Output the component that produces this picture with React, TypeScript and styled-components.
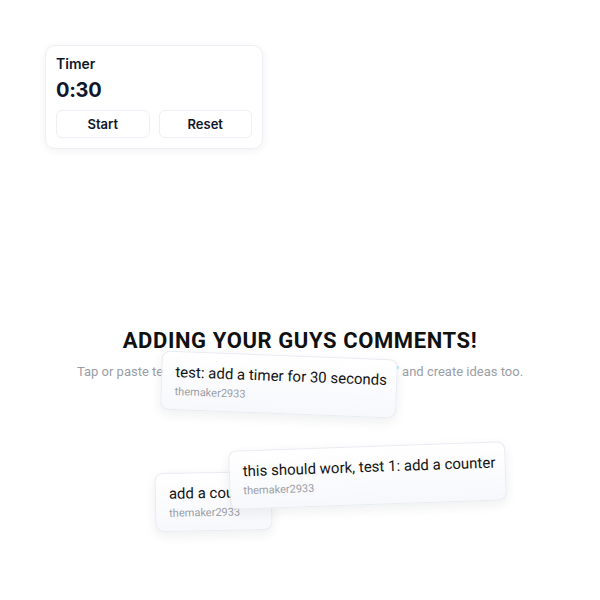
import React from "react";
import styled, { createGlobalStyle } from "styled-components";

const Global = createGlobalStyle`
  html, body { margin: 0; padding: 0; background: #ffffff; }
  body { font-family: Roboto, "Liberation Sans", sans-serif; }
`;

const Page = styled.div`
  position: relative;
  width: 600px;
  height: 600px;
  box-sizing: border-box;
  padding: 45px 0 0;
  display: flex;
  flex-direction: column;
  overflow: hidden;
  background: #ffffff;
`;

const TimerCard = styled.div`
  align-self: flex-start;
  margin-left: 45px;
  width: 218px;
  box-sizing: border-box;
  padding: 9px 10px 10px;
  background: #ffffff;
  border: 1px solid #eceff3;
  border-radius: 10px;
  box-shadow: 0 2px 8px rgba(15, 23, 42, 0.06);
  font-family: Inter, "Liberation Sans", sans-serif;
  color: #0f172a;
`;

const TimerTitle = styled.div`
  font-size: 14px;
  font-weight: 600;
  line-height: 18px;
`;

const TimerValue = styled.div`
  margin-top: 4px;
  font-size: 20px;
  font-weight: 700;
  letter-spacing: -0.3px;
  line-height: 26px;
`;

const ButtonRow = styled.div`
  display: grid;
  grid-template-columns: 1fr 1fr;
  gap: 9px;
  margin-top: 7px;
`;

const Button = styled.button`
  height: 28px;
  background: #ffffff;
  border: 1px solid #eceff3;
  border-radius: 6px;
  font-family: Inter, "Liberation Sans", sans-serif;
  font-size: 13px;
  font-weight: 600;
  color: #0f172a;
  cursor: pointer;
`;

const Intro = styled.div`
  margin-top: 178px;
  text-align: center;
`;

const Headline = styled.h1`
  margin: 0;
  font-size: 22px;
  font-weight: 700;
  letter-spacing: 0.6px;
  line-height: 28px;
  color: #111111;
`;

const Subtitle = styled.p`
  margin: 9px 0 0;
  font-size: 13px;
  line-height: 16px;
  color: #9a9ea6;
`;

// comment notes float freely on the canvas
const Note = styled.div<{ $x: number; $y: number; $w: number; $r: number }>`
  position: absolute;
  left: ${(p) => p.$x}px;
  top: ${(p) => p.$y}px;
  width: ${(p) => p.$w}px;
  box-sizing: border-box;
  padding: 10px 13px 10px;
  background: linear-gradient(180deg, #ffffff 0%, #f7f8fc 100%);
  border: 1px solid #e8ebf1;
  border-radius: 8px;
  box-shadow: 0 4px 12px rgba(15, 23, 42, 0.07);
  transform: rotate(${(p) => p.$r}deg);
  white-space: nowrap;
  overflow: hidden;
`;

const NoteText = styled.div`
  font-size: 15px;
  line-height: 20px;
  color: #141414;
`;

const NoteUser = styled.div`
  margin-top: 3px;
  font-size: 11px;
  line-height: 14px;
  color: #9a9ea6;
`;

const notes = [
  { x: 155, y: 472, w: 117, r: -1, text: "add a counter" },
  { x: 161, y: 355, w: 236, r: 2.2, text: "test: add a timer for 30 seconds" },
  { x: 229, y: 446, w: 277, r: -2, text: "this should work, test 1: add a counter" },
];

export default function App() {
  return (
    <Page>
      <Global />
      <TimerCard>
        <TimerTitle>Timer</TimerTitle>
        <TimerValue>0:30</TimerValue>
        <ButtonRow>
          <Button>Start</Button>
          <Button>Reset</Button>
        </ButtonRow>
      </TimerCard>
      <Intro>
        <Headline>ADDING YOUR GUYS COMMENTS!</Headline>
        <Subtitle>Tap or paste text to leave a comment, or try typing "test" and create ideas too.</Subtitle>
      </Intro>
      {notes.map((n, i) => (
        <Note key={i} $x={n.x} $y={n.y} $w={n.w} $r={n.r}>
          <NoteText>{n.text}</NoteText>
          <NoteUser>themaker2933</NoteUser>
        </Note>
      ))}
    </Page>
  );
}
